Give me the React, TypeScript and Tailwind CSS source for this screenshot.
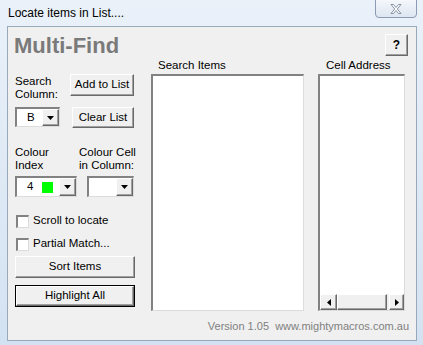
import React from "react";

const raised =
  "bg-[#f0f0f0] border border-t-white border-l-white border-r-[#696969] border-b-[#696969] shadow-[inset_-1px_-1px_0_#a0a0a0]";
const sunken =
  "bg-white border-t-2 border-l-2 border-r border-b border-t-[#828282] border-l-[#828282] border-r-[#dcdcdc] border-b-[#dcdcdc]";

function Arrow({ dir }: { dir: "down" | "left" | "right" }) {
  if (dir === "down")
    return (
      <svg width="7" height="4" viewBox="0 0 7 4">
        <path d="M0 0H7L3.5 4Z" fill="#000" />
      </svg>
    );
  if (dir === "left")
    return (
      <svg width="4" height="7" viewBox="0 0 4 7">
        <path d="M4 0V7L0 3.5Z" fill="#000" />
      </svg>
    );
  return (
    <svg width="4" height="7" viewBox="0 0 4 7">
      <path d="M0 0V7L4 3.5Z" fill="#000" />
    </svg>
  );
}

function Dropdown({
  w,
  h,
  children,
}: {
  w: string;
  h: string;
  children?: React.ReactNode;
}) {
  return (
    <div className={`${w} ${h} shrink-0 ${sunken} flex items-stretch`}>
      <div className="flex-1 flex items-center">{children}</div>
      <div className={`w-[17px] ${raised} flex items-center justify-center`}>
        <Arrow dir="down" />
      </div>
    </div>
  );
}

function Checkbox({ label }: { label: string }) {
  return (
    <div className="flex items-center h-[14px] whitespace-nowrap">
      <div className={`w-[13px] h-[13px] ml-[1px] shrink-0 ${sunken}`} />
      <span className="ml-[4px]">{label}</span>
    </div>
  );
}

export default function App() {
  return (
    <div
      className="w-[423px] h-[345px] flex flex-col bg-gradient-to-b from-[#eaf1f9] to-[#d3e2f2] overflow-hidden"
      style={{ fontFamily: '"Liberation Sans", Arial, sans-serif' }}
    >
      {/* Title bar */}
      <div className="h-[26px] shrink-0 flex items-start">
        <div className="pl-[8px] pt-[6px] text-[12px] leading-[14px] text-black">
          Locate items in List....
        </div>
        <div className="ml-auto mr-[6px] mt-[-1px] w-[42px] h-[19px] rounded-b-[4px] border border-[#8a9bb3] bg-gradient-to-b from-[#f4f7fb] to-[#dde6f1] flex items-center justify-center">
          <svg width="12" height="10" viewBox="0 0 12 10">
            <path
              d="M1 0.5H3.5L6 3.5L8.5 0.5H11L7.3 5L11 9.5H8.5L6 6.5L3.5 9.5H1L4.7 5Z"
              fill="#fff"
              stroke="#7a889c"
              strokeWidth="0.9"
              strokeLinejoin="round"
            />
          </svg>
        </div>
      </div>

      {/* Client */}
      <div className="ml-[7px] mr-[6px] h-[315px] shrink-0 border border-[#9aa9ba] bg-[#f0f0f0] flex flex-col text-[11.5px] text-black">
        {/* Header */}
        <div className="h-[30px] shrink-0 flex items-start">
          <div className="ml-[6px] mt-[7px] text-[22px] leading-[24px] font-bold text-[#7a7a7a]">
            Multi-Find
          </div>
          <div
            className={`ml-auto mr-[8px] mt-[7px] w-[23px] h-[22px] ${raised} flex items-center justify-center font-bold text-[12px]`}
          >
            ?
          </div>
        </div>

        {/* Main */}
        <div className="flex h-[254px] shrink-0">
          {/* Left column */}
          <div className="ml-[7px] w-[120px] shrink-0 flex flex-col pt-[17px] whitespace-nowrap">
            <div className="flex h-[31px]">
              <div className="leading-[13px] pt-[1px]">
                Search
                <br />
                Column:
              </div>
              <div
                className={`ml-auto mr-[1px] w-[64px] h-[22px] ${raised} flex items-center justify-center`}
              >
                Add to List
              </div>
            </div>
            <div className="flex items-start mt-[2px]">
              <Dropdown w="w-[45px]" h="h-[20px]">
                <span className="ml-[10px]">B</span>
              </Dropdown>
              <div
                className={`ml-auto mr-[1px] w-[62px] h-[21px] ${raised} flex items-center justify-center`}
              >
                Clear List
              </div>
            </div>
            <div className="flex mt-[18px] leading-[13px]">
              <div className="w-[64px] shrink-0">
                Colour
                <br />
                Index
              </div>
              <div>
                Colour Cell
                <br />
                in Column:
              </div>
            </div>
            <div className="flex mt-[4px]">
              <Dropdown w="w-[62px]" h="h-[21px]">
                <span className="ml-[10px]">4</span>
                <span className="ml-[9px] w-[11px] h-[11px] bg-[#00ff00]" />
              </Dropdown>
              <div className="ml-[10px]">
                <Dropdown w="w-[47px]" h="h-[21px]" />
              </div>
            </div>
            <div className="mt-[17px]">
              <Checkbox label="Scroll to locate" />
            </div>
            <div className="mt-[9px]">
              <Checkbox label="Partial Match..." />
            </div>
            <div
              className={`mt-[5px] w-[120px] h-[22px] ${raised} flex items-center justify-center`}
            >
              Sort Items
            </div>
            <div className="mt-[7px] w-[120px] h-[22px] border border-black">
              <div
                className={`w-full h-full ${raised} flex items-center justify-center`}
              >
                Highlight All
              </div>
            </div>
          </div>

          {/* Middle column */}
          <div className="ml-[16px] w-[153px] shrink-0 flex flex-col">
            <div className="h-[17px] pl-[7px] leading-[14px] pt-[1px]">
              Search Items
            </div>
            <div className={`h-[237px] ${sunken}`} />
          </div>

          {/* Right column */}
          <div className="ml-[14px] w-[87px] shrink-0 flex flex-col">
            <div className="h-[17px] pl-[8px] leading-[14px] pt-[1px] whitespace-nowrap">
              Cell Address
            </div>
            <div className={`h-[237px] ${sunken} flex flex-col`}>
              <div className="flex-1" />
              <div className="h-[16px] flex bg-[#f0f0f0]">
                <div
                  className={`w-[17px] ${raised} flex items-center justify-center`}
                >
                  <Arrow dir="left" />
                </div>
                <div className={`w-[50px] ${raised}`} />
                <div className="flex-1" />
                <div
                  className={`w-[15px] ${raised} flex items-center justify-center`}
                >
                  <Arrow dir="right" />
                </div>
              </div>
            </div>
          </div>
        </div>

        {/* Footer */}
        <div className="flex justify-end pr-[7px] pt-[8px] text-[11px] leading-[14px] text-[#808080]">
          Version 1.05&nbsp;&nbsp;www.mightymacros.com.au
        </div>
      </div>
    </div>
  );
}
